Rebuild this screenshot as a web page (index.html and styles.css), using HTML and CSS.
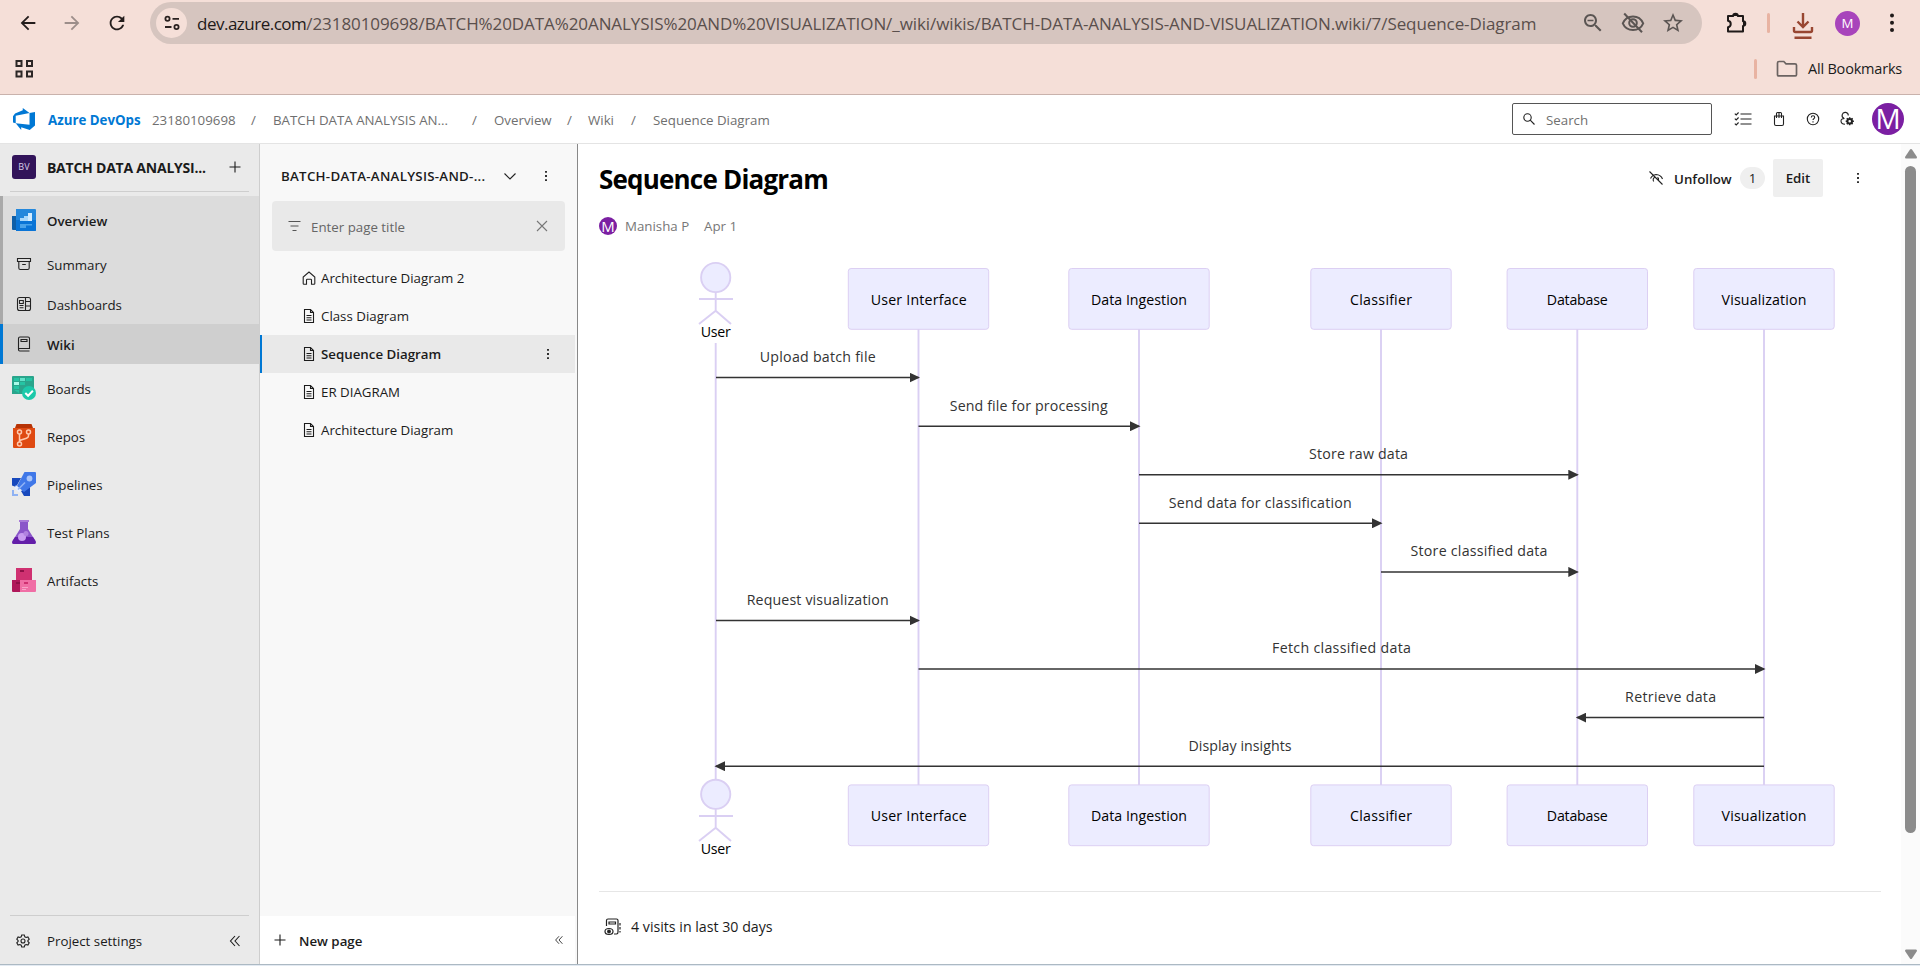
FILE: index.html
```html
<!DOCTYPE html>
<html lang="en">
<head>
<meta charset="utf-8">
<title>Sequence Diagram - Wiki</title>
<link rel="stylesheet" href="styles.css">
</head>
<body>
<svg class="defs" width="0" height="0" aria-hidden="true">
  <defs>
    <symbol id="page" viewBox="0 0 16 16"><path d="M3.5 1.5h6l3 3v10h-9zM9.5 1.5v3h3M5.5 7.5h5M5.5 9.8h5M5.5 12h5" fill="none" stroke="currentColor" stroke-width="1.1"/></symbol>
    <symbol id="kebab" viewBox="0 0 16 16"><path d="M7.1 3h1.8v1.8H7.1zM7.1 7.1h1.8v1.8H7.1zM7.1 11.2h1.8V13H7.1z" fill="currentColor"/></symbol>
    <symbol id="plus" viewBox="0 0 16 16"><path d="M8 2.5v11M2.5 8h11" stroke="currentColor" stroke-width="1.1"/></symbol>
    <symbol id="collapse" viewBox="0 0 16 16"><path d="M8 3L3.5 8L8 13M12.5 3L8 8l4.500 5" fill="none" stroke="currentColor" stroke-width="1.1"/></symbol>
    <marker id="arrow" markerWidth="11" markerHeight="10" refX="9" refY="5" orient="auto" markerUnits="userSpaceOnUse"><path d="M0 0L10.500 5L0 10z" fill="#333"/></marker>
  </defs>
</svg>

<header class="browser">
  <div class="toolbar">
    <svg class="nav-ico" viewBox="0 0 24 24"><path d="M20 11H7.830l5.590-5.590L12 4l-8 8 8 8 1.410-1.410L7.830 13H20z"/></svg>
    <svg class="nav-ico dim" viewBox="0 0 24 24"><path d="M12 4l-1.410 1.410L16.170 11H4v2h12.170l-5.580 5.590L12 20l8-8z"/></svg>
    <svg class="nav-ico" viewBox="0 0 24 24"><path d="M17.65 6.35C16.2 4.9 14.21 4 12 4c-4.420 0-7.990 3.580-7.990 8s3.570 8 7.990 8c3.730 0 6.840-2.550 7.730-6h-2.080c-.820 2.330-3.040 4-5.650 4-3.310 0-6-2.690-6-6s2.690-6 6-6c1.660 0 3.140.690 4.220 1.780L13 11h7V4z"/></svg>
    <div class="omnibox">
      <span class="site"><svg width="18" height="18" viewBox="0 0 18 18" fill="none" stroke="#2b2220" stroke-width="1.800"><circle cx="4.500" cy="4.800" r="2.100"/><path d="M9.500 4.800h6.500M2 13h6.500"/><circle cx="13.500" cy="13" r="2.100"/></svg></span>
      <span class="url"><span class="host">dev.azure.com</span>/23180109698/BATCH%20DATA%20ANALYSIS%20AND%20VISUALIZATION/_wiki/wikis/BATCH-DATA-ANALYSIS-AND-VISUALIZATION.wiki/7/Sequence-Diagram</span>
      <span class="omni-icons">
        <svg viewBox="0 0 24 24"><path d="M15.5 14h-.79l-.28-.27C15.41 12.59 16 11.11 16 9.5 16 5.91 13.09 3 9.5 3S3 5.91 3 9.5 5.91 16 9.5 16c1.610 0 3.090-.59 4.230-1.570l.27.28v.79l5 4.990L20.490 19zm-6 0C7.010 14 5 11.990 5 9.500S7.010 5 9.500 5 14 7.010 14 9.500 11.990 14 9.500 14zM6.500 8.700h6v1.600h-6z"/></svg>
        <svg viewBox="0 0 24 24" class="line"><path d="M1.800 12.300C3.700 8 7.500 5.400 12 5.400s8.300 2.600 10.200 6.900C20.300 16.600 16.500 19 12 19s-8.300-2.400-10.200-6.700z"/><circle cx="12" cy="12" r="3.800"/><path d="M3.200 2.500l17.800 18.800"/></svg>
        <svg viewBox="0 0 24 24"><path d="M22 9.240l-7.190-.62L12 2 9.190 8.630 2 9.240l5.460 4.730L5.820 21 12 17.270 18.180 21l-1.630-7.030zM12 15.400l-3.760 2.270 1-4.280-3.320-2.880 4.380-.38L12 6.100l1.710 4.040 4.380.38-3.320 2.880 1 4.280z"/></svg>
      </span>
    </div>
    <div class="chrome-actions">
      <svg width="24" height="24" viewBox="0 0 24 24"><path d="M4 5h5.200a2.300 2.300 0 0 1 4.600 0H19v5.300a2.300 2.300 0 0 1 0 4.600V20.500H4v-4.300a3.300 3.300 0 0 0 0-6.500z" fill="none" stroke="#1f1a19" stroke-width="2" stroke-linejoin="round"/><path d="M9 5a2.400 2.400 0 0 1 5 0zM19 10a2.400 2.400 0 0 1 0 5z" fill="#1f1a19"/></svg>
      <i class="sep"></i>
      <svg class="download" width="22" height="28" viewBox="0 0 22 28" fill="none" stroke="#984631" stroke-width="2.400"><path d="M11 1v14M5.500 9.500L11 15l5.500-5.500M2 15v3.500q0 1.500 1.500 1.500h15q1.500 0 1.500-1.500V15M2.500 25.800h17"/></svg>
      <span class="user">M</span>
      <svg width="8" height="24" viewBox="0 0 8 24" fill="#1f1a19"><circle cx="4" cy="4.500" r="2"/><circle cx="4" cy="11.700" r="2"/><circle cx="4" cy="19" r="2"/></svg>
    </div>
  </div>
  <div class="bookmarks">
    <svg width="20" height="20" viewBox="0 0 20 20" fill="none" stroke="#2b2625" stroke-width="2"><path d="M2.500 2h5v5h-5zM13 2h5v5h-5zM2.500 12.500h5v5h-5zM13 12.500h5v5h-5z"/></svg>
    <span class="all">
      <i class="sep"></i>
      <svg width="22" height="18" viewBox="0 0 22 18" fill="none" stroke="#6b6361" stroke-width="1.700"><path d="M1.500 14.800V3q0-1.500 1.500-1.500h4.800l2.200 2.300h9q1.500 0 1.500 1.500v9.500q0 1-1 1H2.500q-1 0-1-1z"/></svg>
      <span class="all-text">All Bookmarks</span>
    </span>
  </div>
</header>

<header class="suite">
  <svg class="logo" width="22" height="22" viewBox="0 0 24 24" fill="#0078d4"><path d="M0 8.877L2.247 5.910l8.405-3.416V.022l7.370 5.393L2.966 8.338v8.225L0 15.707zm24-4.450v14.651l-5.753 4.900-9.303-3.057v3.056l-5.978-7.416 15.057 1.798V5.415z"/></svg>
  <nav class="crumbs">
    <b>Azure DevOps</b><span>23180109698</span><i>/</i><span class="c-proj">BATCH DATA ANALYSIS AN...</span><i>/</i><span>Overview</span><i>/</i><span>Wiki</span><i>/</i><span class="c-seq">Sequence Diagram</span>
  </nav>
  <div class="search"><svg width="12" height="12" viewBox="0 0 12 12" fill="none" stroke="#222" stroke-width="1.100"><circle cx="4.500" cy="4.500" r="3.700"/><path d="M7.200 7.200l4.300 4.300"/></svg><span>Search</span></div>
  <div class="suite-icons">
    <svg width="18" height="16" viewBox="0 0 18 16" fill="none" stroke="#222" stroke-width="1.100"><path d="M6.500 3h11M6.500 8h11M6.500 13h11M.8 2.600l1.400 1.300L4.600 1.500M.8 7.600l1.400 1.300 2.400-2.400M.8 12.600l1.400 1.300 2.400-2.400"/></svg>
    <svg width="16" height="16" viewBox="0 0 16 16" fill="none" stroke="#222" stroke-width="1.100"><path d="M3.500 5h9v8q0 1.500-1.500 1.500H5Q3.500 14.500 3.500 13zM5.500 7V2.500q0-1 1-1h3q1 0 1 1V7M8 1.500V7"/></svg>
    <svg width="16" height="16" viewBox="0 0 16 16" fill="none" stroke="#222" stroke-width="1.100"><circle cx="8" cy="8" r="5.700"/><path d="M6.300 6.500q0-1.700 1.700-1.700t1.700 1.500q0 .9-.9 1.400-.8.500-.8 1.400M8 10.300v1.200"/></svg>
    <svg width="16" height="16" viewBox="0 0 16 16" fill="none" stroke="#222" stroke-width="1.100"><path d="M5 7.300A3.100 3.100 0 1 1 9.300 4.500M5.500 7.500q-3.500 0-3.500 2.500 0 3 4 3.200"/><circle cx="10.700" cy="10.200" r="2.300" stroke-width="2"/><path d="M10.700 6.200v1.500M10.700 12.700v1.600M6.700 10.200H8M13.400 10.200h1.500M7.800 7.300l1 1M12.600 12.100l1 1M13.600 7.300l-1 1M8.800 12.100l-1 1" stroke-width="1.500"/></svg>
  </div>
  <span class="me">M</span>
</header>

<div class="app">
  <aside class="side">
    <div class="proj"><span class="bv">BV</span><b>BATCH DATA ANALYSI...</b><svg width="16" height="16"><use href="#plus"/></svg></div>
    <div class="hub">
      <a class="row top strong"><svg width="24" height="24" viewBox="0 0 24 24"><path d="M0 8h4v14H1q-1 0-1-1z" fill="#0f5fa8"/><path d="M4 1h19q1 0 1 1v20q0 1-1 1H4z" fill="#2488dc"/><path d="M4 12h20v10q0 1-1 1H4z" fill="#0a74d6"/><path d="M8 10h4V8h4V5h4v8H8z" fill="#a9d8fb"/><path d="M16 5h4v8h-4z" fill="#d3ecff"/><path d="M8 16h12v1.500h-6V20H8z" fill="#4aa3ea"/></svg>Overview</a>
      <a class="row"><svg width="16" height="16" viewBox="0 0 16 16" class="thin"><path d="M1.500 2.500h13v3h-13zM2.800 5.500v6.500q0 1.500 1.500 1.500h7.400q1.500 0 1.500-1.500V5.500M6.200 8.500h3.600"/></svg>Summary</a>
      <a class="row"><svg width="16" height="16" viewBox="0 0 16 16" class="thin"><rect x="1.500" y="1.500" width="13" height="13" rx="2"/><path d="M9.500 1.500v13M9.500 5.500h5M9.500 10h5M3.500 4.500h3.800v3H3.500zM3.500 9.500h4M3.500 11.800h4"/></svg>Dashboards</a>
      <a class="row on strong"><svg width="16" height="16" viewBox="0 0 16 16" class="thin"><path d="M2.500 13.500v-11q0-1.500 1.500-1.500h8q1.500 0 1.500 1.500v10H3.500q-1 0-1 1.300 0 1.200 1.200 1.200h9.800M5 3.500h6v2H5z"/></svg>Wiki</a>
    </div>
    <a class="row top"><svg width="24" height="24" viewBox="0 0 24 24"><path d="M0 1q0-1 1-1h20q1 0 1 1v17H0z" fill="#2aa58c"/><path d="M2 2h5v3H2zM14 2h6v3h-6zM8 6h5v3H8zM2 10h5v3H2zM2 14h5v3" fill="#25c4a3"/><path d="M8 2h5v3H8z" fill="#62e2c9"/><path d="M2 6h5v3H2z" fill="#a9fbe8"/><circle cx="17" cy="17" r="7" fill="#1cc9aa"/><path d="M13.300 17l2.800 2.800 4.800-5" stroke="#fff" stroke-width="2" fill="none"/></svg>Boards</a>
    <a class="row top"><svg width="24" height="24" viewBox="0 0 24 24"><path d="M4.500 0h15l1.500 4H3z" fill="#b73305"/><path d="M1 4h22v19q0 1-1 1H2q-1 0-1-1z" fill="#df4a12"/><g fill="none" stroke="#ffc9ae" stroke-width="1.500"><circle cx="7.500" cy="8" r="2"/><circle cx="16.500" cy="8" r="2"/><circle cx="7.500" cy="20" r="2"/><path d="M7.500 10v8M16.500 10v2q0 1.500-2 2.200L9 16q-1.500.7-1.500 2"/></g></svg>Repos</a>
    <a class="row top"><svg width="24" height="24" viewBox="0 0 24 24"><path d="M0 6h9l-5 9-4-1.500zM18 15v9h-6l-3-5z" fill="#1849bd"/><path d="M12.500 0H23q1 0 1 1v10L12 20l-7-6z" fill="#4078e8"/><path d="M4 13l5 6-2 1.500L2.500 16z" fill="#e6efff"/><circle cx="17.500" cy="6.500" r="2.900" fill="#a9c5fa"/><path d="M6 17.500L13 10.500" stroke="#8fb2f6" stroke-width="1.600"/><path d="M0 18h2v4h4v2H0z" fill="#8fb2f3"/></svg>Pipelines</a>
    <a class="row top"><svg width="24" height="24" viewBox="0 0 24 24"><path d="M8 2h8v7l7.500 12q1 3-1.500 3H2Q-.5 24 .500 21L8 9z" fill="#8a55c9"/><path d="M3 17h18l2.500 4q1 3-1.500 3H2Q-.5 24 .500 21z" fill="#641fa9"/><path d="M7 0h10v2H7z" fill="#a87ad8"/><circle cx="10" cy="17" r="4" fill="#c89cf0"/><circle cx="14" cy="13.500" r="2.500" fill="#b183e0"/></svg>Test Plans</a>
    <a class="row top"><svg width="24" height="24" viewBox="0 0 24 24"><path d="M4 0h16v12H4z" fill="#cf3171"/><path d="M0 12h8v12H1q-1 0-1-1z" fill="#b0185a"/><path d="M8 12h16v11q0 1-1 1H8z" fill="#f06ea5"/><path d="M8 2h4v2H8zM4 14h4v2H4z" fill="#8f1047"/><path d="M12 14h4v2h-4z" fill="#cf3171"/><path d="M10 19h6v1h-6zM10 21h4v1h-4z" fill="#f9a3c8"/></svg>Artifacts</a>
    <div class="settings"><svg width="14" height="14" viewBox="1 1 14 14" class="thin"><circle cx="8" cy="8" r="2"/><path d="M6.700 2h2.600l.5 1.800 1.300.7 1.800-.5 1.300 2.200-1.300 1.300v1l1.300 1.300-1.300 2.200-1.800-.5-1.300.7-.5 1.800H6.700l-.5-1.800-1.300-.7-1.800.5-1.300-2.200 1.300-1.300v-1L1.800 6.200 3.100 4l1.800.5 1.300-.7z"/></svg><span>Project settings</span><svg width="16" height="16"><use href="#collapse"/></svg></div>
  </aside>

  <section class="tree">
    <div class="tree-head"><b>BATCH-DATA-ANALYSIS-AND-...</b><svg width="14" height="14" viewBox="0 0 14 14" class="thin"><path d="M1.500 4.500L7 10l5.500-5.500"/></svg><svg width="16" height="16"><use href="#kebab"/></svg></div>
    <div class="filter"><svg width="13" height="12" viewBox="0 0 13 12"><path d="M.5 1.500h12M2.500 6h8M4.500 10.500h4" stroke="#555" stroke-width="1.100"/></svg><span>Enter page title</span><svg width="12" height="12" viewBox="0 0 12 12"><path d="M1 1l10 10M11 1L1 11" stroke="#777" stroke-width="1.100"/></svg></div>
    <div class="items">
      <a class="item"><svg width="14" height="14" viewBox="0 0 14 14" class="thin"><path d="M1.200 12.500V6L7 1l5.800 5v6.500q0 .8-.8.8H9.500V9q0-.8-.8-.8H5.300q-.8 0-.8.8v4.300H2q-.8 0-.8-.8z"/></svg>Architecture Diagram 2</a>
      <a class="item"><svg width="16" height="16"><use href="#page"/></svg>Class Diagram</a>
      <a class="item sel"><svg width="16" height="16"><use href="#page"/></svg><span>Sequence Diagram</span><svg width="16" height="16"><use href="#kebab"/></svg></a>
      <a class="item"><svg width="16" height="16"><use href="#page"/></svg>ER DIAGRAM</a>
      <a class="item"><svg width="16" height="16"><use href="#page"/></svg>Architecture Diagram</a>
    </div>
    <div class="new"><svg width="16" height="16"><use href="#plus"/></svg><b>New page</b><svg width="12" height="12"><use href="#collapse"/></svg></div>
  </section>

  <main class="content">
    <div class="title-row">
      <h1>Sequence Diagram</h1>
      <div class="acts">
        <svg width="16" height="16" viewBox="0 0 16 16" class="thin"><path d="M2.500 8.500Q4.500 4.800 8 4.500q5 .3 6.500 4.500M5.700 11.500a2.800 2.800 0 0 1 1.300-4.300M9.500 7.200q1.500 1 1 2.800M1.500 1.500l13 13"/></svg>
        <b class="unf">Unfollow</b><span class="count">1</span><b class="edit">Edit</b><svg width="16" height="16"><use href="#kebab"/></svg>
      </div>
    </div>
    <div class="by"><span class="av">M</span><span class="name">Manisha P</span><span>Apr 1</span></div>

    <svg class="diagram" width="1282" height="650" viewBox="599 241 1282 650">
      <g class="life">
        <path d="M715.700 343V780M918.500 329V785M1139 329V785M1381 329V785M1577.300 329V785M1764 329V785"/>
      </g>
      <g class="fig">
        <circle cx="715.700" cy="277.500" r="14.600"/><path d="M715.700 292v18.700M699 299h34M699 324l16.700-13.300L731 324"/>
        <circle cx="715.700" cy="794.300" r="14.600"/><path d="M715.700 809v18.700M699 816h34M699 841l16.700-13.300L731 841"/>
      </g>
      <g class="box">
        <rect x="848.300" y="268.500" width="140.400" height="60.800" rx="2.800"/><rect x="1068.800" y="268.500" width="140.400" height="60.800" rx="2.800"/><rect x="1310.800" y="268.500" width="140.400" height="60.800" rx="2.800"/><rect x="1507.100" y="268.500" width="140.400" height="60.800" rx="2.800"/><rect x="1693.800" y="268.500" width="140.400" height="60.800" rx="2.800"/>
        <rect x="848.300" y="784.900" width="140.400" height="60.800" rx="2.800"/><rect x="1068.800" y="784.900" width="140.400" height="60.800" rx="2.800"/><rect x="1310.800" y="784.900" width="140.400" height="60.800" rx="2.800"/><rect x="1507.100" y="784.900" width="140.400" height="60.800" rx="2.800"/><rect x="1693.800" y="784.900" width="140.400" height="60.800" rx="2.800"/>
      </g>
      <g class="actor">
        <text x="715.700" y="337" textLength="30">User</text><text x="918.700" y="304.700" textLength="96">User Interface</text><text x="1139" y="304.700" textLength="96">Data Ingestion</text><text x="1381" y="304.700" textLength="62">Classifier</text><text x="1577.300" y="304.700" textLength="61">Database</text><text x="1764" y="304.700" textLength="85">Visualization</text>
        <text x="715.700" y="854" textLength="30">User</text><text x="918.700" y="821" textLength="96">User Interface</text><text x="1139" y="821" textLength="96">Data Ingestion</text><text x="1381" y="821" textLength="62">Classifier</text><text x="1577.300" y="821" textLength="61">Database</text><text x="1764" y="821" textLength="85">Visualization</text>
      </g>
      <g class="msg">
        <path d="M716 377.600H918.500"/><path d="M918.500 426.200H1139"/><path d="M1139 474.700H1577.300"/><path d="M1139 523.300H1381"/><path d="M1381 571.900H1577.300"/><path d="M716 620.400H918.500"/><path d="M918.500 669H1764"/><path d="M1764 717.600H1577.300"/><path d="M1764 766.200H716"/>
      </g>
      <g class="label">
        <text x="817.700" y="362" textLength="116">Upload batch file</text><text x="1028.700" y="410.600" textLength="158">Send file for processing</text><text x="1358.500" y="459.100" textLength="99">Store raw data</text><text x="1260.300" y="507.700" textLength="183">Send data for classification</text><text x="1479" y="556.300" textLength="137">Store classified data</text><text x="817.700" y="604.800" textLength="142">Request visualization</text><text x="1341.500" y="653.400" textLength="139">Fetch classified data</text><text x="1670.600" y="702" textLength="91">Retrieve data</text><text x="1240" y="750.600" textLength="103">Display insights</text>
      </g>
    </svg>

    <footer class="visits"><svg width="18" height="18" viewBox="0 0 18 18" fill="none" stroke="#222" stroke-width="1.200"><path d="M2.500 8V2.500q0-1.500 1.500-1.500h8.500q1.500 0 1.500 1.500V14q0 2-1.500 2H10M5 4h6.500v2H5zM16 5v2.500M16 9v2.500M16 13v1.500"/><ellipse cx="5" cy="13.500" rx="4" ry="3"/><circle cx="5" cy="13.500" r="1.300" fill="#222"/></svg><span>4 visits in last 30 days</span></footer>
  </main>

  <div class="scroll"><svg width="12" height="10" viewBox="0 0 12 10"><path d="M6 0q.6 0 1 .5L12 8q0 1.500-1 1.500H1Q0 9.500 0 8L5 .5Q5.400 0 6 0z" fill="#8b8b8b"/></svg><i></i><svg width="12" height="10" viewBox="0 0 12 10"><path d="M6 10q.6 0 1-.5L12 2Q12 .500 11 .500H1Q0 .500 0 2l5 7.500q.4.500 1 .5z" fill="#8b8b8b"/></svg></div>
</div>
<div class="bottom"></div>
</body>
</html>
```

FILE: styles.css
```css
* { box-sizing: border-box; }
body { margin: 0; height: 966px; overflow: hidden; display: flex; flex-direction: column; background: #fff; color: #1b1b1b; font: 13.3px/20px "Open Sans", "Noto Sans", sans-serif; }
svg { flex: none; display: block; }
i { font-style: normal; }
b, .strong { font-weight: 600; }
.defs { position: absolute; }
.thin { fill: none; stroke: #222; stroke-width: 1.1; }

/* browser bars */
.browser { height: 95px; flex: none; background: #f5dfd8; border-bottom: 1px solid #c9b2ac; }
.toolbar { display: flex; align-items: center; height: 46px; padding-left: 17px; }
.nav-ico { width: 22px; height: 22px; margin-right: 22px; fill: #231d1c; }
.nav-ico.dim { fill: #9c8e8a; margin-right: 23px; }
.omnibox { display: flex; align-items: center; width: 1552px; height: 42px; border-radius: 21px; background: #d6c5bf; padding-left: 6px; }
.site { display: flex; align-items: center; justify-content: center; width: 31px; height: 30px; border-radius: 50%; background: #f5dfd8; }
.url { margin-left: 10px; width: 1384px; font-size: 17px; white-space: nowrap; color: #5a4f4c; letter-spacing: -0.08px; padding-top: 1px; }
.host { color: #1f1a19; letter-spacing: -0.5px; }
.omni-icons { display: flex; gap: 16px; }
.omni-icons svg { width: 24px; height: 24px; fill: #5b5553; }
.omni-icons .line { fill: none; stroke: #5b5553; stroke-width: 2; }
.chrome-actions { display: flex; align-items: center; padding-left: 22px; }
.sep { width: 3px; height: 20px; border-radius: 2px; background: #e8b3a2; }
.chrome-actions .sep { margin: 0 22px 0 19px; }
.download { margin-top: 6px; }
.user { width: 25px; height: 25px; border-radius: 50%; background: #a844bb; color: #fff; text-align: center; line-height: 25px; margin: 0 28px 0 21px; }
.bookmarks { display: flex; justify-content: space-between; align-items: center; height: 46px; padding: 0 19px 0 14px; }
.all { display: flex; align-items: center; }
.all svg { margin: 0 10px 0 19px; }
.all-text { width: 93px; font-size: 14.5px; white-space: nowrap; letter-spacing: -0.2px; }

/* suite header */
.suite { display: flex; align-items: center; height: 49px; flex: none; border-bottom: 1px solid #e4e4e4; padding-left: 13px; }
.crumbs { display: grid; grid-template-columns: 104px 99px 22px 199px 22px 73px 21px 43px 22px 120px; margin-left: 13px; padding-top: 2px; width: 1464px; color: #6f6f6f; white-space: nowrap; }
.crumbs b { color: #0078d4; font-weight: 700; letter-spacing: 0; }
.search { display: flex; align-items: center; gap: 11px; width: 200px; height: 32px; border: 1px solid #555; border-radius: 2px; padding-left: 10px; color: #707070; }
.search span { padding-top: 2px; }
.suite-icons { display: flex; align-items: center; gap: 18px; margin-left: 22px; }
.suite-icons svg:first-child { margin-right: 1px; }
.me { width: 32px; height: 32px; border-radius: 50%; background: #7b1fa2; color: #fff; font-size: 28px; line-height: 31px; text-align: center; margin-left: 17px; }

.app { flex: 1; display: flex; min-height: 0; }

/* hub navigation */
.side { width: 260px; display: flex; flex-direction: column; background: #eaeaea; border-right: 1px solid #cecece; }
.proj { display: flex; align-items: center; height: 48px; margin: 0 10px 4px; padding: 0 6px 1px 2px; border-bottom: 1px solid #cecece; }
.proj b { font-size: 14px; font-weight: 700; width: 181px; margin-left: 11px; padding-top: 2px; white-space: nowrap; letter-spacing: -0.22px; }
.bv { width: 24px; height: 24px; border-radius: 3px; background: #32145a; color: #d8cde6; font-size: 9px; line-height: 24px; text-align: center; }
.hub { background: #dcdcdc; border-left: 3px solid #a9a9a9; }
.row { display: flex; align-items: center; height: 40px; padding: 2px 0 0 16px; gap: 15px; }
.row svg { margin-bottom: 2px; }
.hub .row { padding-left: 13px; }
.row.top { height: 48px; padding-left: 12px; gap: 11px; }
.hub .row.top { padding-left: 9px; }
.hub .row.on { margin-left: -3px; border-left: 3px solid #0078d4; background: #cfcfcf; }
.settings { display: flex; align-items: center; height: 49px; margin: auto 10px 0; padding: 1px 6px 0; border-top: 1px solid #cecece; }
.settings span { margin-left: 17px; width: 180px; }

/* page tree */
.tree { width: 318px; display: flex; flex-direction: column; background: #f8f8f8; border-right: 1px solid #888; }
.tree-head { display: flex; align-items: center; height: 57px; padding: 8px 0 0 21px; }
.tree-head b { width: 222px; white-space: nowrap; letter-spacing: 0.27px; padding-bottom: 2px; }
.tree-head svg { margin-bottom: 1px; }
.tree-head svg:last-child { margin-left: 21px; }
.filter { display: flex; align-items: center; width: 293px; height: 50px; margin-left: 12px; border-radius: 4px; background: #e9e9e9; padding-left: 16px; color: #666; }
.filter span { margin-left: 10px; width: 225px; padding-top: 1px; }
.items { margin-top: 8px; }
.item { display: flex; align-items: center; height: 38px; width: 315px; padding-left: 41px; gap: 4px; white-space: nowrap; }
.item svg[width="14"] { margin: 0 1px; }
.item.sel { border-left: 2px solid #0078d4; background: #e9e9e9; padding-left: 39px; font-weight: 600; }
.item.sel span { width: 215px; }
.new { display: flex; align-items: center; width: 315px; height: 48px; margin-top: auto; background: #fff; padding-left: 12px; }
.new b { margin-left: 11px; width: 254px; padding-top: 2px; }

/* wiki page */
.content { width: 1323px; padding-left: 21px; display: flex; flex-direction: column; }
.title-row { display: flex; justify-content: space-between; height: 53px; padding-top: 15px; }
h1 { margin: 0; font-size: 26px; line-height: 40px; font-weight: 700; letter-spacing: -0.8px; white-space: nowrap; color: #000; }
.acts { display: flex; align-items: center; height: 38px; padding-right: 35px; }
.unf { margin-left: 10px; width: 66px; padding-top: 1px; }
.count { width: 25px; height: 22px; border-radius: 11px; background: #efefef; line-height: 22px; text-align: center; }
.edit { width: 50px; height: 38px; margin: 0 27px 0 8px; border-radius: 2px; background: #efefef; line-height: 39px; text-align: center; }
.by { display: flex; align-items: center; height: 44px; padding-top: 13px; color: #777; white-space: nowrap; }
.av { width: 18px; height: 18px; border-radius: 50%; background: #7b1fa2; color: #fff; text-align: center; line-height: 18px; font-size: 15px; }
.name { width: 79px; margin-left: 8px; }
.diagram { font-family: "Open Sans", sans-serif; font-size: 14.2px; }
.life path, .fig { fill: none; stroke: #dacff3; stroke-width: 1.9; }
.fig circle { fill: #ececff; }
.box rect { fill: #ececff; stroke: #dccff3; stroke-width: 1; }
.actor text, .label text { text-anchor: middle; fill: #000; }
.label text { fill: #333; }
.msg path { fill: none; stroke: #333; stroke-width: 1.5; marker-end: url(#arrow); }
.visits { display: flex; align-items: center; width: 1282px; height: 70px; border-top: 1px solid #e6e6e6; padding-left: 5px; gap: 9px; font-size: 14.2px; }

.scroll { width: 19px; display: flex; flex-direction: column; align-items: center; padding: 5px 0 5px; background: #fbfbfb; }
.scroll i { width: 11px; height: 667px; margin: 7px 0 auto; border-radius: 6px; background: #8b8b8b; }
.bottom { height: 2px; flex: none; border-top: 1px solid #acb9c3; background: #e3eaf2; }
```
